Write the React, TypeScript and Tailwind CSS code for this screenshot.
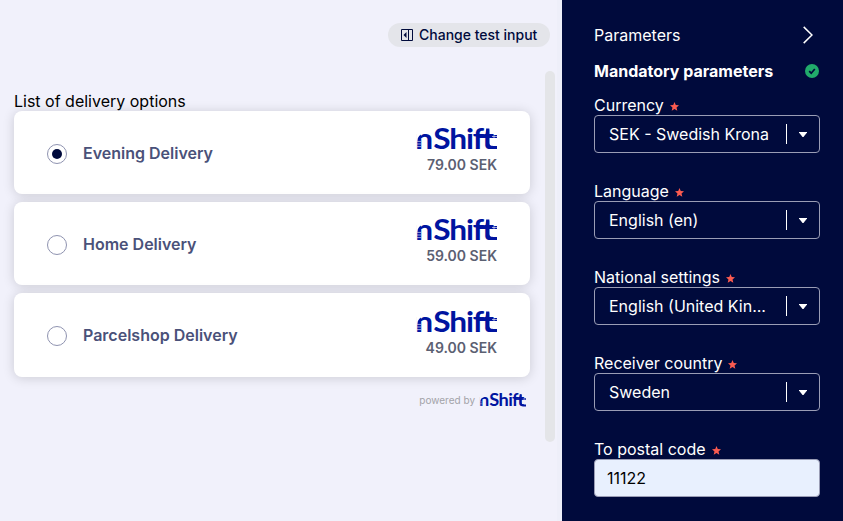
import React, { useState } from 'react';

const deliveryOptions = [
  { id: 'evening', name: 'Evening Delivery', price: '79.00 SEK' },
  { id: 'home', name: 'Home Delivery', price: '59.00 SEK' },
  { id: 'parcelshop', name: 'Parcelshop Delivery', price: '49.00 SEK' },
];

const parameters = [
  { label: 'Currency', value: 'SEK - Swedish Krona' },
  { label: 'Language', value: 'English (en)' },
  { label: 'National settings', value: 'English (United Kin...' },
  { label: 'Receiver country', value: 'Sweden' },
];

function Logo({ className = '', stripe = '#ffffff' }: { className?: string; stripe?: string }) {
  return (
    <svg viewBox="0 0 80 22" preserveAspectRatio="none" className={`overflow-visible ${className}`} aria-label="nShift">
      <text
        x="-1.5 14.7 29.400 44.500 50.700 59.300"
        y="21"
        transform="scale(1.1 1)"
        fontFamily="Lato, sans-serif"
        fontWeight="700"
        fontSize="28.8"
        fill="#0014a0"
      >
        nShift
      </text>
      {/* crossbar, taller stem and longer foot of the last letter */}
      <path d="M61 7H80V10H61z" fill="#0014a0" />
      <path d="M70.700.4V14.500Q70.700 19.500 75.500 19.500H80" fill="none" stroke="#0014a0" strokeWidth="3.200" />
      {/* rounded shoulder and speed stripes */}
      <path d="M-.5 5H6.500C3 6.500.5 9 .2 13H-.5z" fill={stripe} />
      <path d="M-.2 13.400H4.200M-.2 16H4.200M-.2 18.600H4.200M75 8.500H80.200M77 7.200V10" stroke={stripe} strokeWidth="0.6" />
    </svg>
  );
}

function RequiredStar() {
  return (
    <svg viewBox="0 0 24 24" className="mt-[3px] h-[9px] w-[9px]" fill="#fa5b50">
      <path d="M12 0l3.400 8.100 8.600.7-6.600 5.700 2.100 8.500L12 18.500 4.500 23l2.100-8.500L0 8.800l8.600-.7z" />
    </svg>
  );
}

function FieldLabel({ text }: { text: string }) {
  return (
    <div className="flex h-5 items-center gap-1.5 text-base leading-5">
      <span>{text}</span>
      <RequiredStar />
    </div>
  );
}

export default function App() {
  const [selected, setSelected] = useState('evening');

  return (
    <div className="flex h-[521px] w-[843px] overflow-hidden bg-[#f1f1fb] font-['Inter',sans-serif]">
      <main className="flex w-[562px] shrink-0 flex-col border-r-[5px] border-[#eeeff9]">
        <div className="flex h-[71px] shrink-0 justify-end pt-[23px] pr-[7px]">
          <button className="flex h-6 w-[162px] items-center gap-1.5 rounded-full bg-[#e4e5ea] pl-[13px] text-sm font-medium text-[#000a3c]">
            <svg viewBox="0 0 12 12" className="h-3 w-3 shrink-0" fill="none" stroke="currentColor">
              <path d="M.5.5h11v11H.5zM7.500.5v11" />
              <path d="M5.500 3v6L2.500 6z" fill="currentColor" stroke="none" />
            </svg>
            <span className="whitespace-nowrap">Change test input</span>
          </button>
        </div>

        <div className="flex">
          <section className="w-[545px] pr-[15px] pl-3.5">
            <h2 className="h-10 pt-[18px] text-base leading-6 text-black">List of delivery options</h2>
            <div className="flex flex-col gap-2">
              {deliveryOptions.map((option) => (
                <label
                  key={option.id}
                  className="group flex h-[83.100px] items-center rounded-lg bg-white pr-[33px] pb-px pl-[33px] shadow-[0_1px_12px_rgba(0,0,0,0.16)] last:h-[84px] last:pb-0.5"
                >
                  <input
                    type="radio"
                    name="delivery"
                    className="sr-only"
                    checked={selected === option.id}
                    onChange={() => setSelected(option.id)}
                  />
                  <span className="mt-1 flex h-5 w-5 items-center justify-center rounded-full border border-[#8f93b0]">
                    {selected === option.id && <span className="h-2.5 w-2.5 rounded-full bg-[#000a3c]" />}
                  </span>
                  <span className="mt-px ml-4 text-base font-semibold text-[#4a5179]">{option.name}</span>
                  <span className="mb-0.5 ml-auto flex flex-col items-end group-last:mb-0">
                    <Logo className="h-[22px] w-20" />
                    <span className="mt-[5px] text-sm leading-5 font-semibold text-[#5b6072]">{option.price}</span>
                  </span>
                </label>
              ))}
            </div>
            <div className="mt-[15px] flex items-center justify-end gap-[5px] pr-1">
              <span className="text-[10px] leading-4 text-[#a3a3a8]">powered by</span>
              <Logo className="h-[13px] w-[46px]" stripe="#f1f1fb" />
            </div>
          </section>
          <div className="h-[371px] w-2.5 rounded-full bg-[#e4e5e8]" />
        </div>
      </main>

      <aside className="flex-1 bg-[#000a3c] pr-[23px] pl-8 text-white">
        <div className="flex h-12 items-end justify-between pr-[7px]">
          <span className="text-base leading-[26px]">Parameters</span>
          <svg viewBox="0 0 10 18" className="mb-1 h-[18px] w-2.5" fill="none" stroke="currentColor" strokeWidth="1.5">
            <path d="M.7.900L9 9 .7 17.100" />
          </svg>
        </div>
        <div className="flex h-[47px] items-center justify-between pb-px">
          <span className="text-base font-bold">Mandatory parameters</span>
          <svg viewBox="0 0 14 14" className="mr-[1px] h-3.5 w-3.5">
            <circle cx="7" cy="7" r="7" fill="#21ab6b" />
            <path d="M4.200 7.200l2 2L9.800 5" fill="none" stroke="#000a3c" strokeWidth="1.700" />
          </svg>
        </div>

        {parameters.map((param) => (
          <div key={param.label} className="h-[86px]">
            <FieldLabel text={param.label} />
            <button className="flex h-[38px] w-[226px] items-center rounded border border-[#9a9db5] pl-3.5 text-left">
              <span className="w-[163px] text-base whitespace-nowrap">{param.value}</span>
              <span className="ml-3.5 h-5 w-px bg-white" />
              <svg viewBox="0 0 8 5" className="ml-3 h-[5px] w-2" fill="currentColor">
                <path d="M0 0h8v.6L4.500 5h-1L0 .6z" />
              </svg>
            </button>
          </div>
        ))}

        <FieldLabel text="To postal code" />
        <input
          className="block h-[38px] w-[226px] rounded border border-[#9a9db5] bg-[#e8f0fe] px-3 text-base text-black outline-none"
          defaultValue="11122"
        />
      </aside>
    </div>
  );
}
